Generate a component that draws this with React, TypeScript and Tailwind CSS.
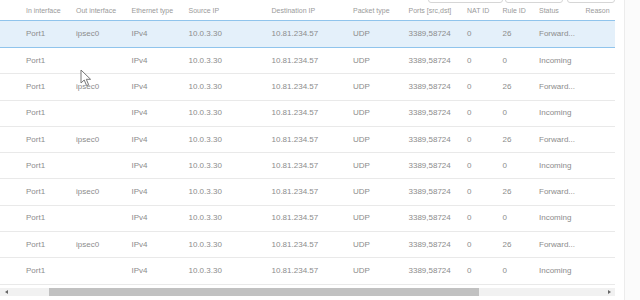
import React from 'react';

const COLS = [
  { label: 'In interface', w: 'w-[50px]' },
  { label: 'Out interface', w: 'w-[55.5px]' },
  { label: 'Ethernet type', w: 'w-[57px]' },
  { label: 'Source IP', w: 'w-[83px]' },
  { label: 'Destination IP', w: 'w-[81.5px]' },
  { label: 'Packet type', w: 'w-[55.5px]' },
  { label: 'Ports [src,dst]', w: 'w-[58.5px]' },
  { label: 'NAT ID', w: 'w-[35.5px]' },
  { label: 'Rule ID', w: 'w-[36.5px]' },
  { label: 'Status', w: 'w-[46.5px]' },
  { label: 'Reason', w: 'flex-1' },
];

const ROWS = Array.from({ length: 10 }, (_, i) => {
  const fwd = i % 2 === 0;
  return [
    'Port1',
    fwd ? 'ipsec0' : '',
    'IPv4',
    '10.0.3.30',
    '10.81.234.57',
    'UDP',
    '3389,58724',
    '0',
    fwd ? '26' : '0',
    fwd ? 'Forward...' : 'Incoming',
    '',
  ];
});

function Cursor() {
  return (
    <svg className="absolute left-[80px] top-[69px]" width="12" height="18" viewBox="0 0 12 18">
      <path
        d="M1 1 L1 14 L4.2 11 L6.6 16.6 L8.6 15.7 L6.3 10.3 L10.6 10.3 Z"
        fill="#fff"
        stroke="#777"
        strokeWidth="1"
        strokeLinejoin="round"
      />
    </svg>
  );
}

export default function App() {
  return (
    <div className="relative w-[640px] h-[300px] bg-white flex overflow-hidden font-['Liberation_Sans',Arial,sans-serif] text-[#8c8c8c]">
      <div className="w-[615px] flex flex-col shrink-0">
        {/* toolbar buttons, only their bottoms show */}
        <div className="h-[3px] overflow-hidden flex items-end justify-end">
          <div className="h-[20px] w-[75px] border border-[#d6d6d6] rounded-[3px] mr-[2px]" />
          <div className="h-[20px] w-[58px] border border-[#d6d6d6] rounded-[3px] mr-[4px]" />
          <div className="h-[20px] w-[48px] border border-[#d6d6d6] rounded-[3px]" />
        </div>

        <div className="h-[17px] flex items-center pl-[26px] text-[7px] text-[#9a9a9a]">
          {COLS.map((c) => (
            <div key={c.label} className={`${c.w} shrink-0 whitespace-nowrap`}>
              {c.label}
            </div>
          ))}
        </div>

        {ROWS.map((r, i) => (
          <div
            key={i}
            className={
              i === 0
                ? 'h-[28px] flex items-center pl-[26px] text-[8px] bg-[#e4f0fa] border-y border-[#90c4ec]'
                : 'h-[26.3px] flex items-center pl-[26px] text-[8px] border-b border-[#e9e9e9]'
            }
          >
            {r.map((v, j) => (
              <div key={j} className={`${COLS[j].w} shrink-0 whitespace-nowrap`}>
                {v}
              </div>
            ))}
          </div>
        ))}

        {/* horizontal scrollbar */}
        <div className="mt-[3px] h-[8px] bg-[#f1f1f1] flex items-center">
          <div className="w-[49px] flex items-center pl-[5px]">
            <div className="w-0 h-0 border-y-[2px] border-y-transparent border-r-[3px] border-r-[#666]" />
          </div>
          <div className="w-[430px] h-[8px] bg-[#c1c1c1]" />
          <div className="flex-1 flex justify-end pr-[4px]">
            <div className="w-0 h-0 border-y-[2px] border-y-transparent border-l-[3px] border-l-[#666]" />
          </div>
        </div>
      </div>

      <div className="w-[9px] shrink-0" />
      <div className="flex-1 border-l border-[#ececec] bg-[#fbfbfb]" />

      <Cursor />
    </div>
  );
}
